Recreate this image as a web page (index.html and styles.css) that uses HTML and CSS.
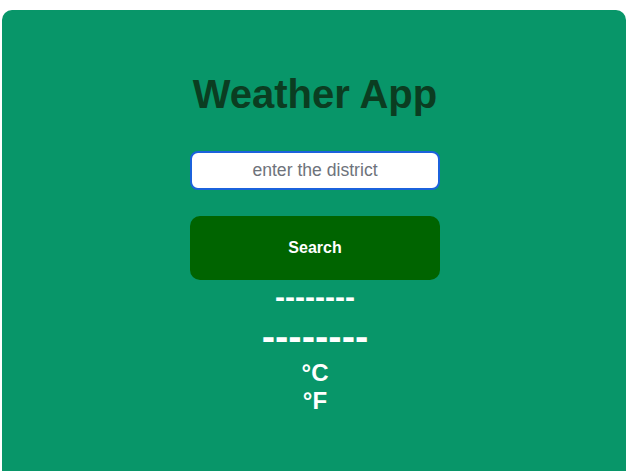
FILE: index.html
```html
<!DOCTYPE html>
<html lang="en">
<head>
<meta charset="utf-8">
<title>Weather App</title>
<link rel="stylesheet" href="styles.css">
</head>
<body>
<main class="card">
  <h1 class="title">Weather App</h1>
  <input class="district" type="text" placeholder="enter the district">
  <button class="search">Search</button>
  <h2 class="place">--------</h2>
  <h1 class="temp">--------</h1>
  <div class="unit">°C</div>
  <div class="unit">°F</div>
</main>
</body>
</html>
```
FILE: styles.css
```css
html, body {
  background: #ffffff;
}
body {
  margin: 10px 1px 0 2px;
  font-family: "Liberation Sans", Arial, sans-serif;
}
.card {
  background: #089669;
  border-radius: 10px;
  min-height: 520px;
  padding: 62px 0 0 2px;
  display: flex;
  flex-direction: column;
  align-items: center;
  box-sizing: border-box;
}
.title {
  margin: 0;
  font-size: 40px;
  line-height: normal;
  font-weight: bold;
  color: #0b3d21;
}
.district {
  margin-top: 34px;
  width: 250px;
  height: 39px;
  box-sizing: border-box;
  border: 2px solid #1b62dc;
  border-radius: 8px;
  background: #ffffff;
  font-family: "Liberation Sans", Arial, sans-serif;
  font-size: 17.6px;
  text-align: center;
  outline: none;
  padding: 0 8px;
}
.district::placeholder {
  color: #6e737b;
}
.search {
  margin-top: 26px;
  width: 250px;
  height: 64px;
  border: none;
  border-radius: 10px;
  background: #006400;
  color: #ffffff;
  font-family: "Liberation Sans", Arial, sans-serif;
  font-size: 16px;
  font-weight: bold;
}
.place {
  margin: 0;
  font-size: 30px;
  line-height: normal;
  font-weight: bold;
  color: #ffffff;
}
.temp {
  margin: 0;
  font-size: 40px;
  line-height: normal;
  font-weight: bold;
  color: #ffffff;
}
.unit {
  font-size: 24px;
  line-height: normal;
  font-weight: bold;
  color: #ffffff;
}
```
